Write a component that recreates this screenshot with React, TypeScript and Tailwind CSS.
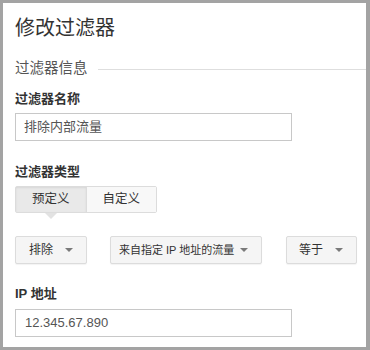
import React from 'react';

const FONT = { fontFamily: '"Liberation Sans", "Noto Sans CJK SC", sans-serif' };

const Caret = () => (
  <svg width="8" height="4" viewBox="0 0 8 4" className="shrink-0">
    <path d="M0 0 L8 0 L4 4 Z" fill="#7a7a7a" />
  </svg>
);

const Dropdown = ({ label, width, pl, size }: { label: string; width: string; pl: string; size: string }) => (
  <div
    className={`${width} ${pl} ${size} h-[28px] flex items-center justify-between pr-[13px] bg-[#f5f5f5] border border-[#dcdcdc] rounded-[2px] shadow-[0_1px_1px_rgba(0,0,0,0.05)] text-[#333]`}
  >
    <span className="whitespace-nowrap">{label}</span>
    <Caret />
  </div>
);

export default function App() {
  return (
    <div
      style={FONT}
      className="w-[370px] h-[350px] bg-white border-t-[3px] border-l-[3px] border-r-4 border-b-[3px] border-[#a3a3a3] flex flex-col"
    >
      {/* header */}
      <div className="pl-[12px] pt-[13px] text-[20px] leading-[24px] text-[#333]">修改过滤器</div>

      {/* section title with rule */}
      <div className="mt-[19px] flex items-center h-[20px]">
        <span className="pl-[12px] pr-[10px] text-[14.5px] text-[#555] whitespace-nowrap">过滤器信息</span>
        <div className="flex-1 h-px bg-[#dedede]" />
      </div>

      <div className="pl-[12px] flex flex-col">
        <div className="mt-[11px] text-[13px] leading-[18px] font-bold text-[#333]">过滤器名称</div>
        <div className="mt-[5px] w-[277px] h-[28px] border border-[#c8c8c8] flex items-center pl-[8px] text-[13px] text-[#555]">
          排除内部流量
        </div>

        <div className="mt-[22px] text-[13px] leading-[18px] font-bold text-[#333]">过滤器类型</div>
        <div className="mt-[5px] flex w-[142px] h-[27px] border border-[#dcdcdc] rounded-[2px] text-[12.5px] text-[#333]">
          <div className="relative flex-1 flex items-center justify-center bg-[#e9e9e9] shadow-[inset_0_1px_2px_rgba(0,0,0,0.08)] border-r border-[#dcdcdc]">
            预定义
            <div className="absolute left-1/2 -translate-x-1/2 top-[26px] w-0 h-0 border-l-[6px] border-r-[6px] border-t-[6px] border-l-transparent border-r-transparent border-t-[#e2e2e2]" />
          </div>
          <div className="flex-1 flex items-center justify-center bg-[#f8f8f8]">自定义</div>
        </div>

        <div className="mt-[23px] flex items-center">
          <Dropdown label="排除" width="w-[72px]" pl="pl-[13px]" size="text-[12px]" />
          <div className="ml-[23px]">
            <Dropdown label="来自指定 IP 地址的流量" width="w-[152px]" pl="pl-[8px]" size="text-[11px]" />
          </div>
          <div className="ml-[24px]">
            <Dropdown label="等于" width="w-[71px]" pl="pl-[12px]" size="text-[12px]" />
          </div>
        </div>

        <div className="mt-[21px] text-[13px] leading-[18px] font-bold text-[#333]">IP 地址</div>
        <div className="mt-[6px] w-[277px] h-[28px] border border-[#c8c8c8] flex items-center pl-[9px] text-[13px] text-[#555]">
          12.345.67.890
        </div>
      </div>
    </div>
  );
}
